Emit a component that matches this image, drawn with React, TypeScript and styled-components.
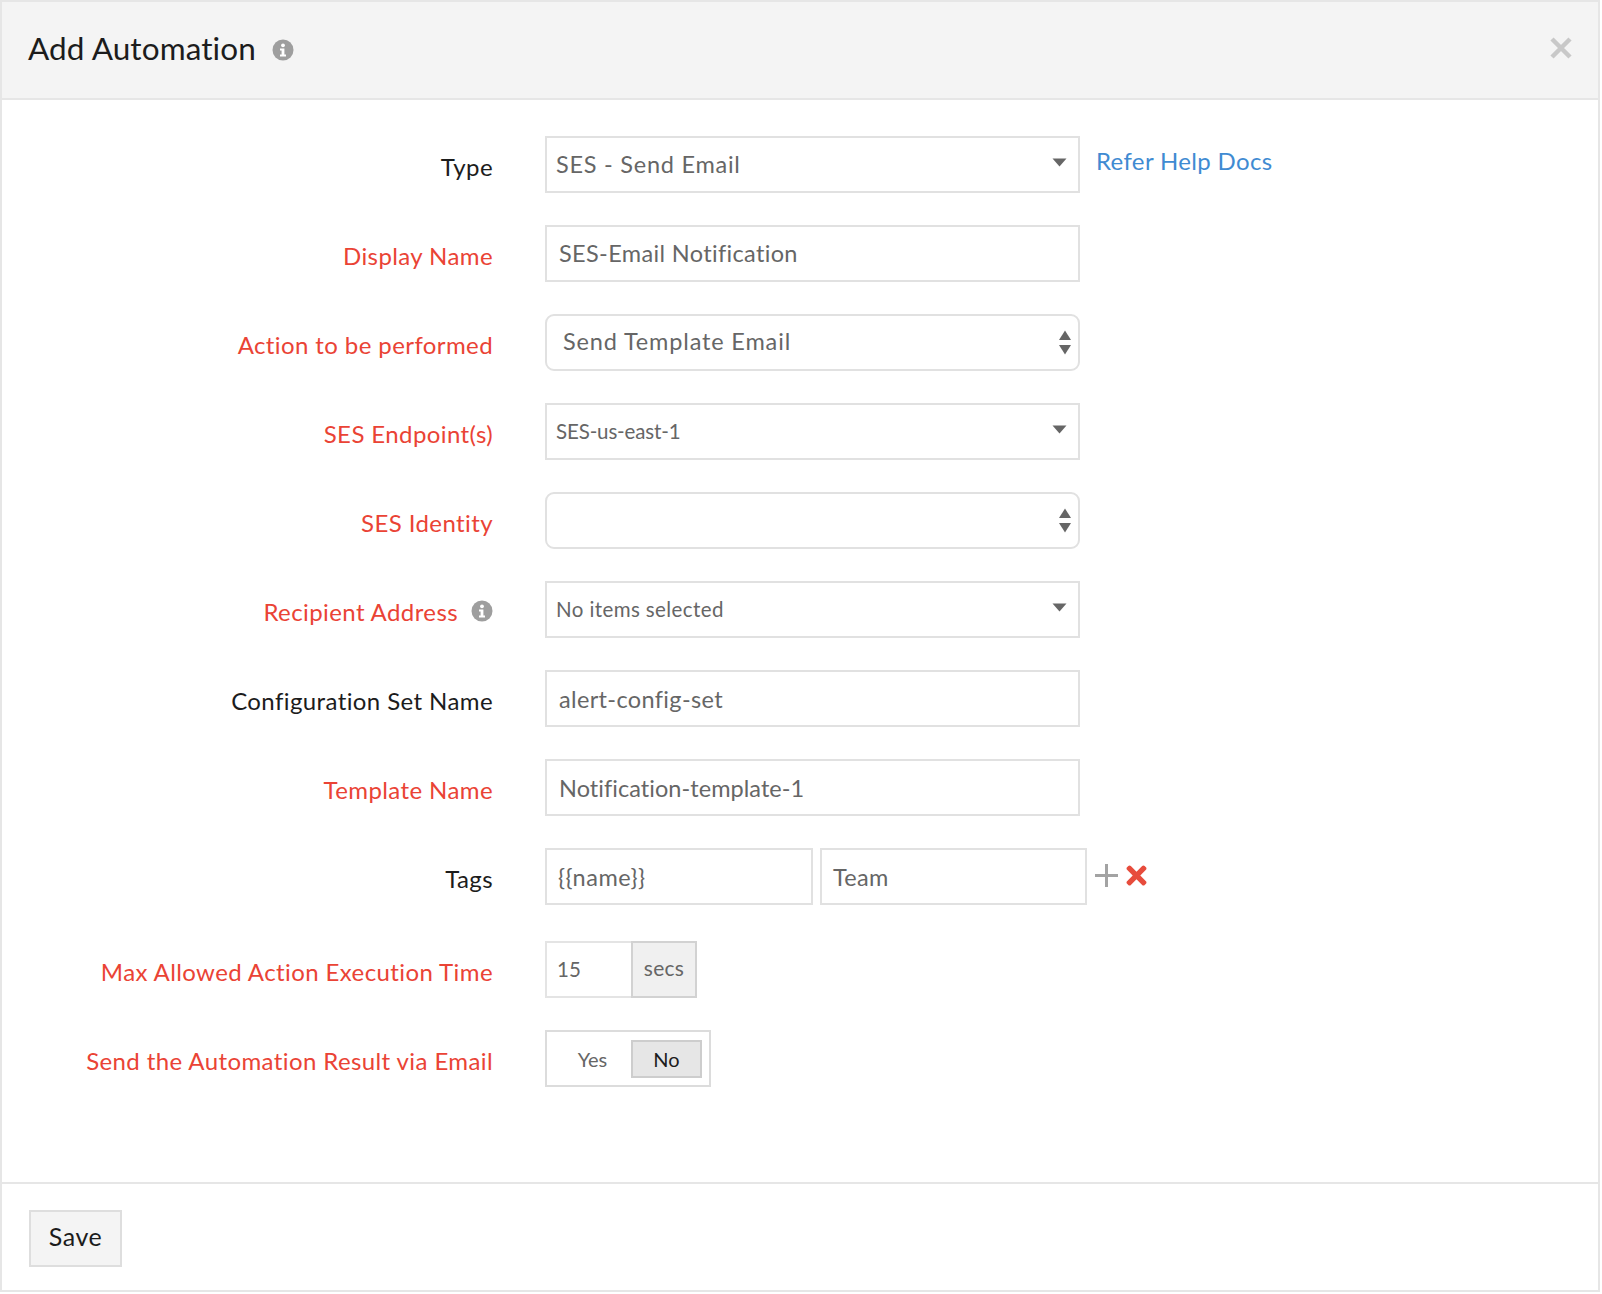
import React from 'react';
import styled, { createGlobalStyle } from 'styled-components';
import { FaTimes } from 'react-icons/fa';

const GlobalStyle = createGlobalStyle`
  html, body {
    margin: 0;
    padding: 0;
    background: #fff;
  }
  * {
    box-sizing: border-box;
  }
`;

const Dialog = styled.div`
  width: 1600px;
  height: 1292px;
  border: 2px solid #e6e6e6;
  display: flex;
  flex-direction: column;
  font-family: Lato, 'Liberation Sans', sans-serif;
  background: #fff;
`;

const Header = styled.div`
  height: 98px;
  flex: none;
  background: #f4f4f4;
  border-bottom: 2px solid #e6e6e6;
  padding: 0 25px 0 26px;
  display: flex;
  align-items: center;
  justify-content: space-between;
`;

const TitleGroup = styled.div`
  display: flex;
  align-items: center;
  gap: 16px;
`;

const Title = styled.h1`
  margin: 0 0 5px;
  font-size: 31.5px;
  font-weight: 400;
  color: #1c1c1c;
  letter-spacing: 0.1px;
  line-height: 40px;
`;

const CloseButton = styled.button`
  border: 0;
  padding: 0;
  margin-bottom: 4px;
  background: none;
  display: flex;
  width: 24px;
  height: 24px;
`;

const Body = styled.div`
  flex: 1;
  padding-top: 36px;
  display: flex;
  flex-direction: column;
`;

const Row = styled.div<{ $gap?: number }>`
  display: grid;
  grid-template-columns: 491px 1fr;
  column-gap: 52px;
  margin-bottom: ${(p) => p.$gap ?? 32}px;
`;

const Label = styled.label<{ $required?: boolean }>`
  display: flex;
  align-items: center;
  justify-content: flex-end;
  gap: 13px;
  height: 57px;
  padding-top: 3px;
  font-size: 24px;
  letter-spacing: 0.4px;
  color: ${(p) => (p.$required ? '#ea4335' : '#1c1c1c')};
`;

const FieldGroup = styled.div`
  display: flex;
  align-items: flex-start;
`;

const Box = styled.div<{
  $width?: number;
  $rounded?: boolean;
  $small?: boolean;
  $inset?: number;
  $tracking?: number;
}>`
  width: ${(p) => p.$width ?? 535}px;
  height: 57px;
  flex: none;
  display: flex;
  align-items: center;
  justify-content: space-between;
  border: 2px solid #e1e1e1;
  border-radius: ${(p) => (p.$rounded ? '9px' : '0')};
  padding: 0 ${(p) => (p.$rounded ? 6 : 11)}px 0 ${(p) => p.$inset ?? 12}px;
  font-size: ${(p) => (p.$small ? '20.5px' : '23.5px')};
  letter-spacing: ${(p) => p.$tracking ?? 0.3}px;
  color: #666;
  background: #fff;
`;

const BoxText = styled.span<{ $lift?: number }>`
  margin-bottom: ${(p) => p.$lift ?? 0}px;
`;

const HelpLink = styled.a`
  margin: 11px 0 0 16px;
  font-size: 24px;
  letter-spacing: 0.35px;
  line-height: 28px;
  color: #3f8bd2;
`;

const TagGap = styled.div`
  width: 7px;
  flex: none;
`;

const TagActions = styled.div`
  display: flex;
  align-items: center;
  gap: 4px;
  height: 54px;
  margin-left: 8px;
`;

const DurationGroup = styled.div`
  display: flex;
  width: 152px;
  height: 57px;
`;

const DurationValue = styled.div`
  width: 86px;
  flex: none;
  display: flex;
  align-items: center;
  padding: 0 0 2px 10px;
  border: 2px solid #e4e4e4;
  border-right: 0;
  font-size: 20.5px;
  color: #666;
`;

const DurationUnit = styled.div`
  flex: 1;
  display: flex;
  align-items: center;
  justify-content: center;
  background: #f0f0f0;
  border: 2px solid #d2d2d2;
  font-size: 21px;
  letter-spacing: 0.3px;
  color: #666;
  padding-bottom: 4px;
`;

const Toggle = styled.div`
  width: 166px;
  height: 57px;
  border: 2px solid #dcdcdc;
  padding: 8px 7px 7px 0;
  display: flex;
`;

const ToggleOption = styled.div<{ $active?: boolean }>`
  flex: ${(p) => (p.$active ? 'none' : '1')};
  width: ${(p) => (p.$active ? '71px' : 'auto')};
  display: flex;
  align-items: center;
  justify-content: center;
  padding-left: ${(p) => (p.$active ? 0 : 7)}px;
  font-size: 20px;
  color: ${(p) => (p.$active ? '#1c1c1c' : '#666')};
  background: ${(p) => (p.$active ? '#e6e6e6' : 'transparent')};
  border: ${(p) => (p.$active ? '2px solid #cdcdcd' : '0')};
`;

const Footer = styled.div`
  flex: none;
  height: 108px;
  border-top: 2px solid #e6e6e6;
  padding: 26px 27px;
`;

const SaveButton = styled.button`
  width: 93px;
  height: 57px;
  padding: 0 0 5px;
  background: #f4f4f4;
  border: 2px solid #dedede;
  font-family: inherit;
  font-size: 25px;
  letter-spacing: 0.5px;
  color: #1c1c1c;
`;

const Caret = styled.svg`
  margin-bottom: 4px;
`;

const InfoIcon = () => (
  <svg width="22" height="22" viewBox="0 0 22 22" aria-hidden="true">
    <circle cx="11" cy="11" r="10.5" fill="#9e9e9e" />
    <circle cx="11" cy="6.3" r="1.9" fill="#fff" />
    <path d="M8 9.4h4.4v6h1.6v2H8v-2h1.6v-4H8z" fill="#fff" />
  </svg>
);

const CloseIcon = () => (
  <svg width="24" height="24" viewBox="0 0 24 24" aria-hidden="true">
    <path d="M3 3l18 18M21 3L3 21" stroke="#c8c8c8" strokeWidth="4.5" fill="none" />
  </svg>
);

const CaretIcon = () => (
  <Caret width="15" height="9" viewBox="0 0 15 9" aria-hidden="true">
    <path d="M0.5 0.5h14L7.5 8.5z" fill="#666" />
  </Caret>
);

const StepperIcon = () => (
  <svg width="14" height="25" viewBox="0 0 14 25" aria-hidden="true">
    <path d="M7 0.5L13 10H1z" fill="#666" />
    <path d="M7 24.5L13 15H1z" fill="#666" />
  </svg>
);

const PlusIcon = () => (
  <svg width="23" height="23" viewBox="0 0 23 23" aria-hidden="true">
    <path d="M11.5 0v23M0 11.5h23" stroke="#a3a3a3" strokeWidth="3" fill="none" />
  </svg>
);

const App = (): JSX.Element => (
  <>
    <GlobalStyle />
    <Dialog>
      <Header>
        <TitleGroup>
          <Title>Add Automation</Title>
          <InfoIcon />
        </TitleGroup>
        <CloseButton>
          <CloseIcon />
        </CloseButton>
      </Header>
      <Body>
        <Row>
          <Label>Type</Label>
          <FieldGroup>
            <Box $inset={9} $tracking={0.75}>
              <BoxText $lift={2}>SES - Send Email</BoxText>
              <CaretIcon />
            </Box>
            <HelpLink>Refer Help Docs</HelpLink>
          </FieldGroup>
        </Row>
        <Row>
          <Label $required>Display Name</Label>
          <FieldGroup>
            <Box $tracking={0.35}>
              <BoxText $lift={2}>SES-Email Notification</BoxText>
            </Box>
          </FieldGroup>
        </Row>
        <Row>
          <Label $required>Action to be performed</Label>
          <FieldGroup>
            <Box $rounded $inset={16} $tracking={0.85}>
              <BoxText $lift={3}>Send Template Email</BoxText>
              <StepperIcon />
            </Box>
          </FieldGroup>
        </Row>
        <Row>
          <Label $required>SES Endpoint(s)</Label>
          <FieldGroup>
            <Box $small $inset={9} $tracking={-0.15}>
              <BoxText $lift={2}>SES-us-east-1</BoxText>
              <CaretIcon />
            </Box>
          </FieldGroup>
        </Row>
        <Row>
          <Label $required>SES Identity</Label>
          <FieldGroup>
            <Box $rounded>
              <span />
              <StepperIcon />
            </Box>
          </FieldGroup>
        </Row>
        <Row>
          <Label $required>
            Recipient Address
            <InfoIcon />
          </Label>
          <FieldGroup>
            <Box $small $inset={9} $tracking={0.4}>
              <BoxText $lift={2}>No items selected</BoxText>
              <CaretIcon />
            </Box>
          </FieldGroup>
        </Row>
        <Row>
          <Label>Configuration Set Name</Label>
          <FieldGroup>
            <Box $tracking={0.35}>alert-config-set</Box>
          </FieldGroup>
        </Row>
        <Row>
          <Label $required>Template Name</Label>
          <FieldGroup>
            <Box $tracking={0.05}>Notification-template-1</Box>
          </FieldGroup>
        </Row>
        <Row $gap={36}>
          <Label>Tags</Label>
          <FieldGroup>
            <Box $width={268} $inset={11} $tracking={0.5}>{'{{name}}'}</Box>
            <TagGap />
            <Box $width={267} $inset={11}>Team</Box>
            <TagActions>
              <PlusIcon />
              <FaTimes size={29} color="#e74c3c" />
            </TagActions>
          </FieldGroup>
        </Row>
        <Row>
          <Label $required>Max Allowed Action Execution Time</Label>
          <FieldGroup>
            <DurationGroup>
              <DurationValue>15</DurationValue>
              <DurationUnit>secs</DurationUnit>
            </DurationGroup>
          </FieldGroup>
        </Row>
        <Row>
          <Label $required>Send the Automation Result via Email</Label>
          <FieldGroup>
            <Toggle>
              <ToggleOption>Yes</ToggleOption>
              <ToggleOption $active>No</ToggleOption>
            </Toggle>
          </FieldGroup>
        </Row>
      </Body>
      <Footer>
        <SaveButton>Save</SaveButton>
      </Footer>
    </Dialog>
  </>
);

export default App;
